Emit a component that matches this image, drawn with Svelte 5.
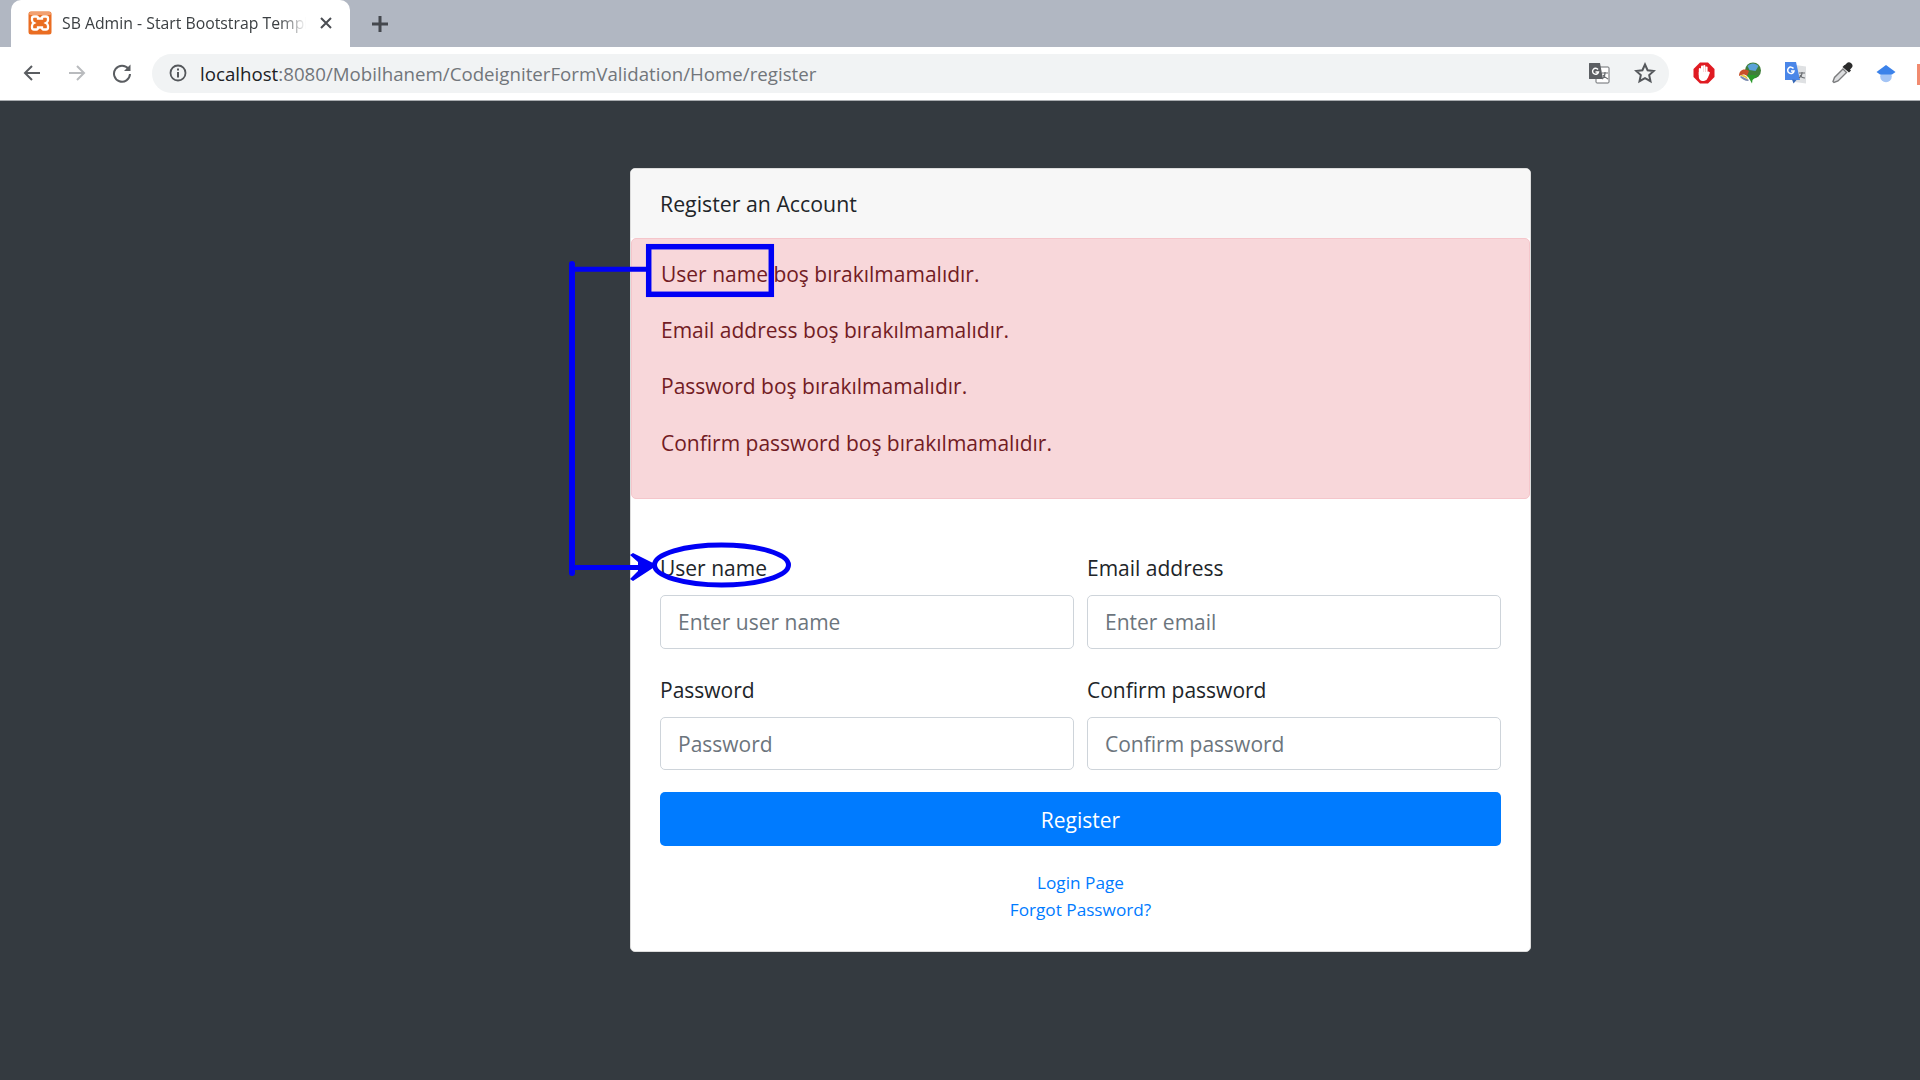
<script>
  const errors = ['User name boş bırakılmamalıdır.', 'Email address boş bırakılmamalıdır.', 'Password boş bırakılmamalıdır.', 'Confirm password boş bırakılmamalıdır.'];
  const fields = [
    { label: 'User name', ph: 'Enter user name' },
    { label: 'Email address', ph: 'Enter email' },
    { label: 'Password', ph: 'Password' },
    { label: 'Confirm password', ph: 'Confirm password' }
  ];
</script>

<div class="page">
  <header class="tabstrip">
    <div class="tab">
      <svg class="favicon" viewBox="0 0 24 24" width="24" height="24">
        <rect x="0.5" y="0.5" width="23" height="23" rx="2.5" fill="#ea6d22"/>
        <rect x="1" y="1" width="22" height="3" rx="1.5" fill="#f2a070"/>
        <path d="M6 5.500h2.500q1.500 0 1.500 2h4q0-2 1.500-2H18q2 0 2 2V9q0 2-2 3q2 1 2 3v1.500q0 2-2 2h-2.500q-1.500 0-1.500-2h-4q0 2-1.500 2H6q-2 0-2-2V15q0-2 2-3q-2-1-2-3V7.500q0-2 2-2z" fill="none" stroke="#fff" stroke-width="2.300"/>
      </svg>
      <span class="tabtitle">SB Admin - Start Bootstrap Template</span>
      <svg class="close" viewBox="0 0 14 14" width="14" height="14"><path d="M2 2l10 10M12 2L2 12" stroke="#4a4d52" stroke-width="2"/></svg>
    </div>
    <svg class="plus" viewBox="0 0 18 18" width="18" height="18"><path d="M9 1v16M1 9h16" stroke="#45484e" stroke-width="3"/></svg>
  </header>

  <nav class="toolbar">
    <svg class="nav" viewBox="0 0 20 20" width="20" height="20"><path d="M18 10H3M10 3l-7 7 7 7" fill="none" stroke="#5a5d61" stroke-width="2"/></svg>
    <svg class="nav" viewBox="0 0 20 20" width="20" height="20"><path d="M2 10h15M10 3l7 7-7 7" fill="none" stroke="#b9bbbe" stroke-width="2"/></svg>
    <svg class="nav" viewBox="0 0 20 20" width="20" height="20"><path d="M16.500 6A8 8 0 1 0 18 11" fill="none" stroke="#5a5d61" stroke-width="2"/><path d="M18.500 1.500v6.500h-6.500z" fill="#5a5d61"/></svg>
    <div class="omnibox">
      <svg viewBox="0 0 18 18" width="18" height="18"><circle cx="9" cy="9" r="7.500" fill="none" stroke="#54575b" stroke-width="1.800"/><path d="M9 8v5.500M9 4.500v2" stroke="#54575b" stroke-width="2"/></svg>
      <span class="url"><b>localhost</b>:8080/Mobilhanem/CodeigniterFormValidation/Home/register</span>
      <svg class="translate" viewBox="0 0 22 22" width="22" height="22">
        <rect x="8" y="5" width="13" height="16" rx="1" fill="#fff" stroke="#6a6d71"/>
        <path d="M1.500 1H12l3 16H1.500A.5.500 0 0 1 1 16.500V1.500A.5.500 0 0 1 1.500 1z" fill="#5c5f63"/>
        <path d="M14 11h6M17 10v1c0 3-1.500 5-3 6M15 13c1 2 3 3 5 4" fill="none" stroke="#6a6d71" stroke-width="1.200"/>
        <path d="M10 7.500A3 3 0 1 0 10.500 10H7.500" fill="none" stroke="#fff" stroke-width="1.400"/>
      </svg>
      <svg class="star" viewBox="0 0 22 22" width="22" height="22"><path d="M11 2.500l2.600 5.700 6.200.7-4.600 4.200 1.300 6.100-5.500-3.100-5.500 3.100 1.300-6.100L2.200 8.900l6.200-.7z" fill="none" stroke="#55585c" stroke-width="2"/></svg>
    </div>
    <div class="extensions">
      <svg viewBox="0 0 22 22" width="22" height="22">
        <path d="M7 0.500h8L21.500 7v8L15 21.500H7L0.500 15V7z" fill="#e01b22"/>
        <rect x="5.800" y="6" width="2.200" height="8" rx="1.100" fill="#fff"/>
        <rect x="8" y="3.500" width="2.200" height="9" rx="1.100" fill="#fff"/>
        <rect x="10.200" y="3" width="2.200" height="9" rx="1.100" fill="#fff"/>
        <rect x="12.400" y="4.500" width="2.200" height="8" rx="1.100" fill="#fff"/>
        <path d="M5.800 10h8.800v-1l2.400 1.500-2 5q-1 3-4 3.500h-2q-3-1-3.200-4z" fill="#fff"/>
      </svg>
      <svg viewBox="0 0 24 24" width="24" height="24">
        <circle cx="15" cy="9.500" r="8" fill="#3f7f3a"/>
        <path d="M9.500 5c3-3.500 8-3.500 11 0l-3 5-6-1z" fill="#5aa2d8"/>
        <path d="M1 15c0-6 5-8 10-5l-2 5c-2-2-5-2-8 0z" fill="#c8502a"/>
        <path d="M2 15c2-2 5-1 7 1l1 3c-3-3-5-4-8-4z" fill="#e6c531"/>
        <path d="M2 16c2 2 5 4 8 4l1-1c-3-1-5-3-8-4z" fill="#7b8bb0"/>
        <path d="M9 14h11l-5.500 5-.5 3.500-2-3.500z" fill="#2b9a2b"/>
      </svg>
      <svg viewBox="0 0 24 24" width="24" height="24">
        <path d="M11 4l11 1.500V22.500L11 21z" fill="#dfe1e3"/>
        <path d="M1 1h11l4 18H1z" fill="#4a86e8"/>
        <path d="M8 18.500l4.500.5-3 3.500z" fill="#3568b8"/>
        <path d="M9.500 7.500A3.200 3.200 0 1 0 10 10H7" fill="none" stroke="#fff" stroke-width="1.500"/>
        <path d="M15 12h6M18 11v1c0 2-1.500 4-3 5M16 14c1 2 3 3 5 3" fill="none" stroke="#6a6d71" stroke-width="1.100"/>
      </svg>
      <svg viewBox="0 0 22 22" width="22" height="22">
        <path d="M14 3l1.500-1.500a3 3 0 0 1 5 4.500L19 7.500l1 1-2 2L11.500 5l2-2z" fill="#2b2b2b"/>
        <path d="M12 7l3.500 3.500-8.500 8.500-4 1.500-1-1 1.500-4z" fill="#dcdddf" stroke="#7b7c7e" stroke-width="1.400"/>
      </svg>
      <svg viewBox="0 0 22 22" width="22" height="22"><circle cx="11" cy="14.500" r="5.800" fill="#a3c4f5"/><path d="M11 3l9.500 7-3.500 2.500H5L1.500 10z" fill="#3b82ea"/></svg>
    </div>
    <div class="edge"></div>
  </nav>

  <main class="content">
    <section class="card">
      <div class="card-header">Register an Account</div>
      <div class="alert">
        {#each errors as e}<p>{e}</p>{/each}
      </div>
      <form class="card-body">
        <div class="grid">
          {#each fields as f}
            <div class="group">
              <span class="label">{f.label}</span>
              <input placeholder={f.ph} />
            </div>
          {/each}
        </div>
        <button type="button">Register</button>
        <div class="links">
          <span class="link">Login Page</span>
          <span class="link">Forgot Password?</span>
        </div>
      </form>
    </section>
  </main>

  <svg class="annotation" viewBox="0 0 1920 1080" width="1920" height="1080" aria-hidden="true">
    <rect x="648.700" y="246.700" width="122.600" height="47.600" fill="none" stroke="#0000f5" stroke-width="5.500"/>
    <path d="M572 264V573" fill="none" stroke="#0000f5" stroke-width="6" stroke-linecap="round"/>
    <path d="M572 269.300H648M572 567.500H645" fill="none" stroke="#0000f5" stroke-width="5"/>
    <path d="M630 555L633 553L653 563L653 568L633 581L630 579L638 571L638 562z" fill="#0000f5"/>
    <ellipse cx="721.500" cy="565" rx="67" ry="20" fill="none" stroke="#0000f5" stroke-width="5"/>
  </svg>
</div>

<style>
  :global(body) { margin: 0; background: #343a40; }
  .page { position: relative; width: 1920px; height: 1080px; overflow: hidden; background: #343a40; font-family: "Open Sans", "Noto Sans", sans-serif; color: #212529; }
  .tabstrip { height: 47px; background: #b1b7c2; display: flex; align-items: center; padding-left: 11px; box-sizing: border-box; }
  .tab { width: 339px; height: 47px; background: #fff; border-radius: 10px 10px 0 0; display: flex; align-items: center; padding: 0 17px 1px; box-sizing: border-box; gap: 10px; }
  .favicon { flex: none; }
  .tabtitle { flex: 1; overflow: hidden; white-space: nowrap; font-size: 15.800px; color: #3c4043; -webkit-mask-image: linear-gradient(90deg, #000 88%, transparent 99%); mask-image: linear-gradient(90deg, #000 88%, transparent 99%); }
  .close { flex: none; }
  .plus { margin-left: 21px; }
  .toolbar { height: 52px; padding-bottom: 1px; background: #fff; border-bottom: 1px solid #a9acb0; display: flex; align-items: center; padding-left: 22px; gap: 25px; position: relative; }
  .omnibox { margin-left: -5px; width: 1517px; height: 39px; border-radius: 20px; background: #f1f3f4; display: flex; align-items: center; padding-left: 17px; padding-right: 13px; box-sizing: border-box; }
  .url { flex: 1; margin-left: 13px; font-size: 18.700px; color: #71767b; white-space: nowrap; }
  .url b { font-weight: 400; color: #202124; }
  .star { margin-left: 24px; }
  .extensions { display: flex; align-items: center; gap: 22.500px; margin-left: -1px; }
  .edge { position: absolute; right: 0; top: 17px; width: 3px; height: 21px; background: #f28b70; }
  .content { height: 979px; background: #343a40; padding: 68px 0 0 630px; box-sizing: border-box; margin-top: -1px; }
  .card { width: 901px; height: 784px; box-sizing: border-box; background: #fff; border: 1px solid #dcdcdc; border-radius: 5px; overflow: hidden; display: flex; flex-direction: column; }
  .card-header { height: 69px; flex: none; background: #f7f7f7; box-sizing: border-box; padding: 0 29px; display: flex; align-items: center; font-size: 21.300px; }
  .alert { height: 261px; flex: none; box-sizing: border-box; background: #f8d7da; border: 1px solid #f5c6cb; border-radius: 5px; padding: 21px 29px; color: #721c24; font-size: 21px; }
  .alert p { margin: 0 0 28.200px; line-height: 28px; }
  .card-body { padding: 54px 29px 0; display: flex; flex-direction: column; }
  .grid { display: grid; grid-template-columns: 414px 414px; column-gap: 13px; row-gap: 26px; }
  .group { display: flex; flex-direction: column; gap: 12px; }
  .label { font-size: 21px; line-height: 30px; }
  input { height: 53.500px; box-sizing: border-box; border: 1px solid #ced4da; border-radius: 5px; padding: 1px 17px 0; font: inherit; font-size: 21px; color: #495057; background: #fff; outline: none; width: 100%; }
  input::placeholder { color: #6c757d; opacity: 1; }
  button { margin-top: 22px; height: 54px; border: 0; border-radius: 5px; background: #007bff; color: #fff; font: inherit; font-size: 21px; padding: 1px 0 0; }
  .links { display: flex; flex-direction: column; align-items: center; margin-top: 23px; }
  .link { color: #007bff; font-size: 17.200px; line-height: 27px; }
  .annotation { position: absolute; left: 0; top: 0; pointer-events: none; }
</style>
